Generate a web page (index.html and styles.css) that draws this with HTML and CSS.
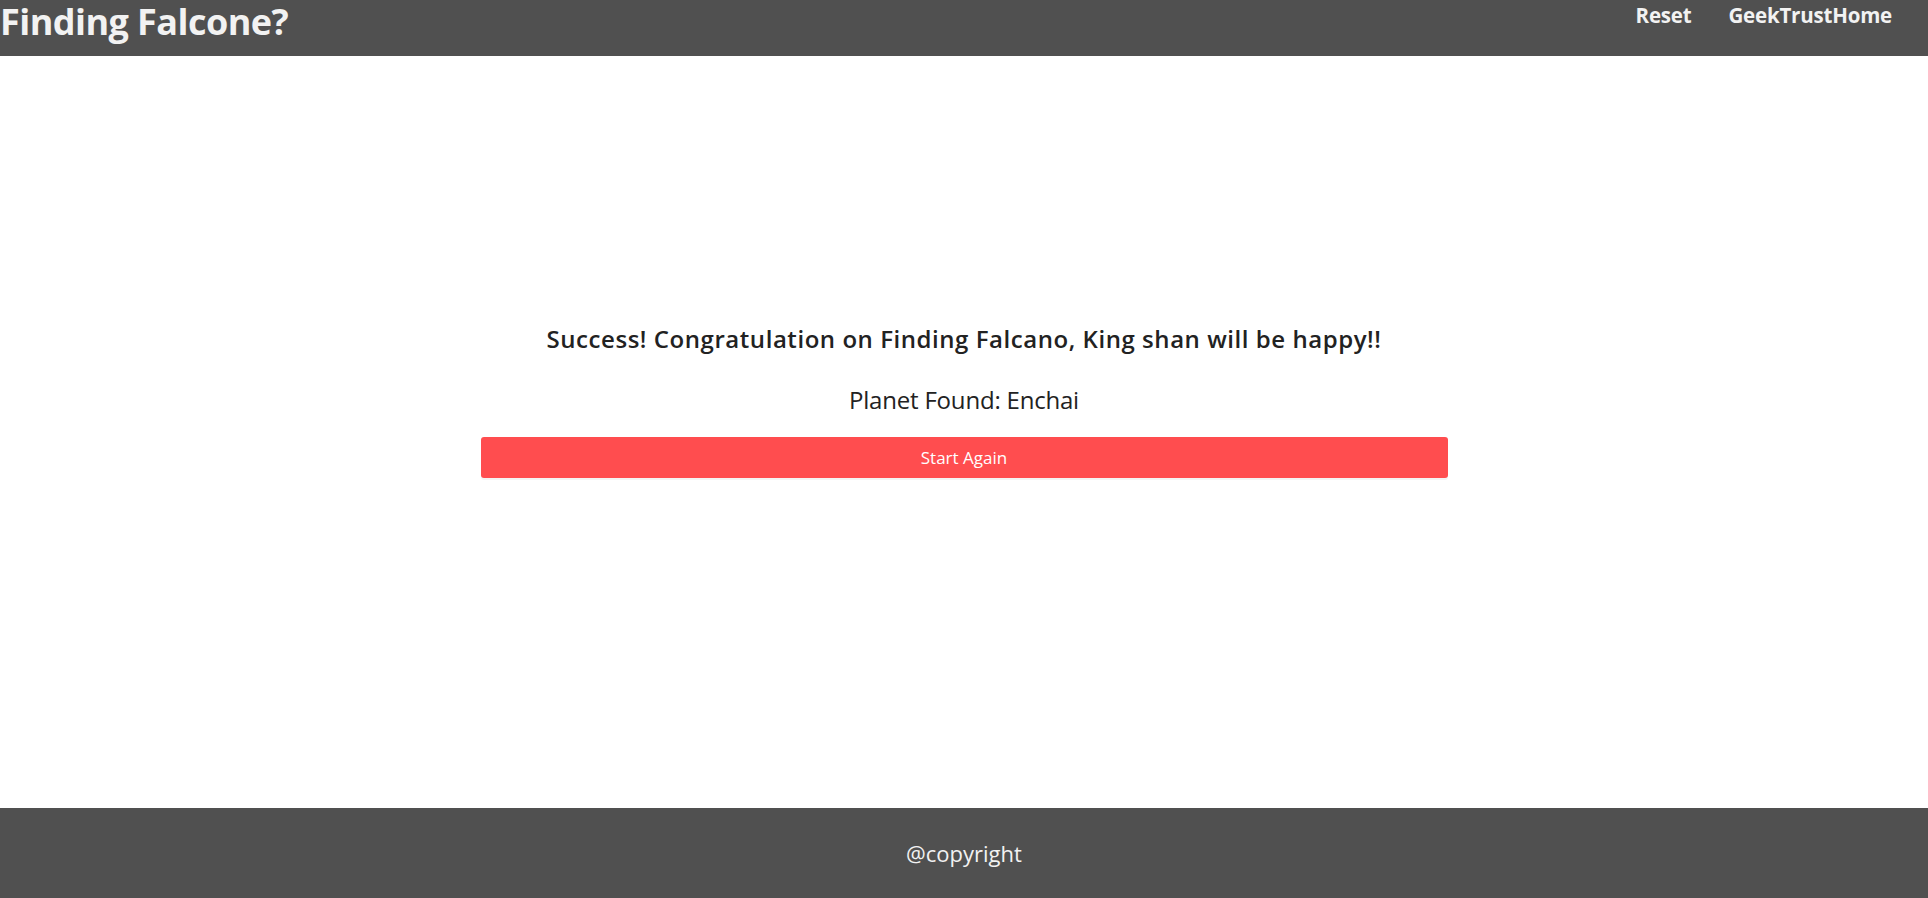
FILE: index.html
```html
<!DOCTYPE html>
<html lang="en">
<head>
<meta charset="utf-8">
<title>Finding Falcone</title>
<link rel="stylesheet" href="styles.css">
</head>
<body>
<div class="app">
  <header class="topbar">
    <h1 class="brand">Finding Falcone?</h1>
    <nav class="nav">
      <a class="nav-link" href="#">Reset</a>
      <a class="nav-link" href="#">GeekTrustHome</a>
    </nav>
  </header>
  <main class="main">
    <section class="result">
      <h4 class="result-title">Success! Congratulation on Finding Falcano, King shan will be happy!!</h4>
      <p class="result-planet">Planet Found: Enchai</p>
      <button class="btn-danger" type="button">Start Again</button>
    </section>
  </main>
  <footer class="footer">@copyright</footer>
</div>
</body>
</html>
```

FILE: styles.css
```css
* { box-sizing: border-box; }
html, body { margin: 0; padding: 0; }
body {
  font-family: "Open Sans", "Noto Sans", sans-serif;
  color: #212529;
  background: #ffffff;
}
.app {
  display: flex;
  flex-direction: column;
  min-height: 898px;
}
.topbar {
  height: 56px;
  background: #505050;
  display: flex;
  justify-content: space-between;
  align-items: flex-start;
  padding: 0 36px 0 0;
}
.brand {
  margin: 0;
  font-size: 36px;
  font-weight: 700;
  line-height: 44px;
  color: #f2f2f2;
  letter-spacing: -0.55px;
}
.nav {
  display: flex;
  gap: 37px;
  padding-top: 0;
}
.nav-link {
  color: #f2f2f2;
  text-decoration: none;
  font-size: 20.5px;
  font-weight: 700;
  line-height: 30px;
  letter-spacing: -0.2px;
}
.main {
  flex: 1;
  display: flex;
  justify-content: center;
  padding-top: 265px;
}
.result {
  width: 967px;
  display: flex;
  flex-direction: column;
  align-items: center;
}
.result-title {
  margin: 0;
  font-size: 24px;
  font-weight: 600;
  line-height: 36px;
  color: #222;
  letter-spacing: 0.55px;
}
.result-planet {
  margin: 25px 0 0;
  font-size: 24px;
  font-weight: 400;
  line-height: 36px;
  color: #222;
  letter-spacing: -0.2px;
}
.btn-danger {
  margin-top: 19px;
  width: 100%;
  height: 41px;
  border: 0;
  border-radius: 3px;
  background: #ff4d4f;
  color: #fff;
  font-family: inherit;
  font-size: 17px;
  box-shadow: 0 2px 0 rgba(0,0,0,0.045);
  cursor: pointer;
}
.footer {
  height: 90px;
  background: #505050;
  color: #f2f2f2;
  display: flex;
  align-items: center;
  justify-content: center;
  font-size: 22px;
}
```
